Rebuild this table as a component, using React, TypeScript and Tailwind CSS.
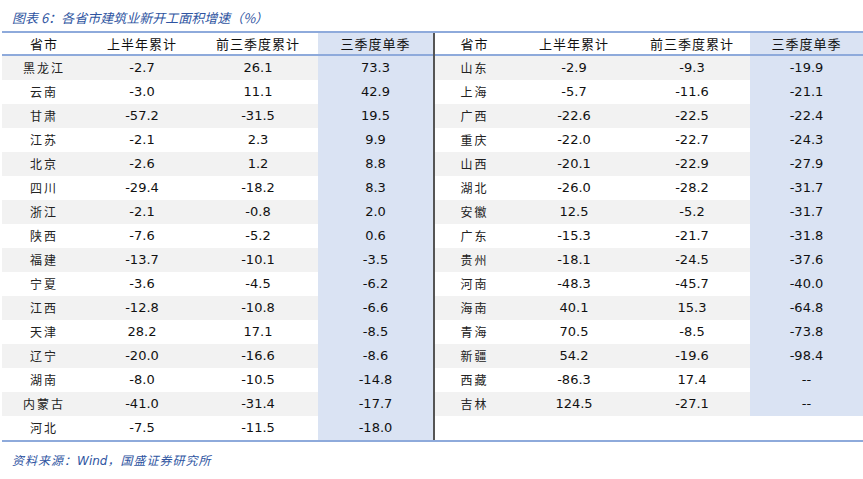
import React from "react";

// ---------------------------------------------------------------------------
// Data
// ---------------------------------------------------------------------------

type Row = [string, string, string, string];

const leftRows: Row[] = [
  ["黑龙江", "-2.7", "26.1", "73.3"],
  ["云南", "-3.0", "11.1", "42.9"],
  ["甘肃", "-57.2", "-31.5", "19.5"],
  ["江苏", "-2.1", "2.3", "9.9"],
  ["北京", "-2.6", "1.2", "8.8"],
  ["四川", "-29.4", "-18.2", "8.3"],
  ["浙江", "-2.1", "-0.8", "2.0"],
  ["陕西", "-7.6", "-5.2", "0.6"],
  ["福建", "-13.7", "-10.1", "-3.5"],
  ["宁夏", "-3.6", "-4.5", "-6.2"],
  ["江西", "-12.8", "-10.8", "-6.6"],
  ["天津", "28.2", "17.1", "-8.5"],
  ["辽宁", "-20.0", "-16.6", "-8.6"],
  ["湖南", "-8.0", "-10.5", "-14.8"],
  ["内蒙古", "-41.0", "-31.4", "-17.7"],
  ["河北", "-7.5", "-11.5", "-18.0"],
];

const rightRows: Row[] = [
  ["山东", "-2.9", "-9.3", "-19.9"],
  ["上海", "-5.7", "-11.6", "-21.1"],
  ["广西", "-22.6", "-22.5", "-22.4"],
  ["重庆", "-22.0", "-22.7", "-24.3"],
  ["山西", "-20.1", "-22.9", "-27.9"],
  ["湖北", "-26.0", "-28.2", "-31.7"],
  ["安徽", "12.5", "-5.2", "-31.7"],
  ["广东", "-15.3", "-21.7", "-31.8"],
  ["贵州", "-18.1", "-24.5", "-37.6"],
  ["河南", "-48.3", "-45.7", "-40.0"],
  ["海南", "40.1", "15.3", "-64.8"],
  ["青海", "70.5", "-8.5", "-73.8"],
  ["新疆", "54.2", "-19.6", "-98.4"],
  ["西藏", "-86.3", "17.4", "--"],
  ["吉林", "124.5", "-27.1", "--"],
];

const headers = ["省市", "上半年累计", "前三季度累计", "三季度单季"];

const cjk = "font-['Noto_Sans_CJK_SC',sans-serif]";
const num = "font-['DejaVu_Sans',sans-serif]";

// ---------------------------------------------------------------------------
// Sub-components
// ---------------------------------------------------------------------------

function DataTable({ rows, widths, blank }: { rows: Row[]; widths: string[]; blank?: boolean }) {
  return (
    <div className="flex flex-col">
      <div className="flex h-[23px] border-b-2 border-[#8eaadb] items-center">
        {headers.map((h, i) => (
          <div
            key={h}
            className={`${widths[i]} h-full flex items-center justify-center ${cjk} text-[13px] tracking-[1px] text-[#111] ${
              i === 3 ? "bg-[#dae3f3]" : ""
            }`}
          >
            {h}
          </div>
        ))}
      </div>
      {rows.map((r, idx) => (
        <div key={r[0]} className={`flex h-[24px] ${idx % 2 === 0 ? "bg-[#f2f2f2]" : "bg-white"}`}>
          <div className={`${widths[0]} flex items-center justify-center ${cjk} text-[12px] tracking-[2px] text-[#222]`}>
            {r[0]}
          </div>
          <div className={`${widths[1]} flex items-center justify-center ${num} text-[13px] text-[#111]`}>{r[1]}</div>
          <div className={`${widths[2]} flex items-center justify-center ${num} text-[13px] text-[#111]`}>{r[2]}</div>
          <div className={`${widths[3]} flex items-center justify-center ${num} text-[13px] text-[#111] bg-[#dae3f3]`}>
            {r[3]}
          </div>
        </div>
      ))}
      {blank && <div className="h-[24px] bg-white" />}
    </div>
  );
}

// ---------------------------------------------------------------------------
// Component
// ---------------------------------------------------------------------------

export default function App() {
  return (
    <div className="w-[863px] h-[479px] bg-white overflow-hidden">
      {/* Title */}
      <div className={`h-[31px] pl-[12px] pt-[9px] ${cjk} italic text-[13px] text-[#2e54a1] leading-[18px]`}>
        图表 6：各省市建筑业新开工面积增速（%）
      </div>

      {/* Tables */}
      <div className="ml-[2px] flex border-y-2 border-[#8eaadb]">
        <DataTable rows={leftRows} widths={["w-[84px]", "w-[112px]", "w-[120px]", "w-[115px]"]} />
        <div className="w-[2px] bg-[#555]" />
        <DataTable
          rows={rightRows}
          widths={["w-[79px]", "w-[120px]", "w-[116px]", "w-[113px]"]}
          blank
        />
      </div>

      {/* Source */}
      <div className={`pl-[12px] pt-[9px] ${cjk} italic text-[12px] tracking-[1px] text-[#2e54a1]`}>
        资料来源：<span className="font-['DejaVu_Sans',sans-serif] tracking-normal">Wind</span>，国盛证券研究所
      </div>
    </div>
  );
}
